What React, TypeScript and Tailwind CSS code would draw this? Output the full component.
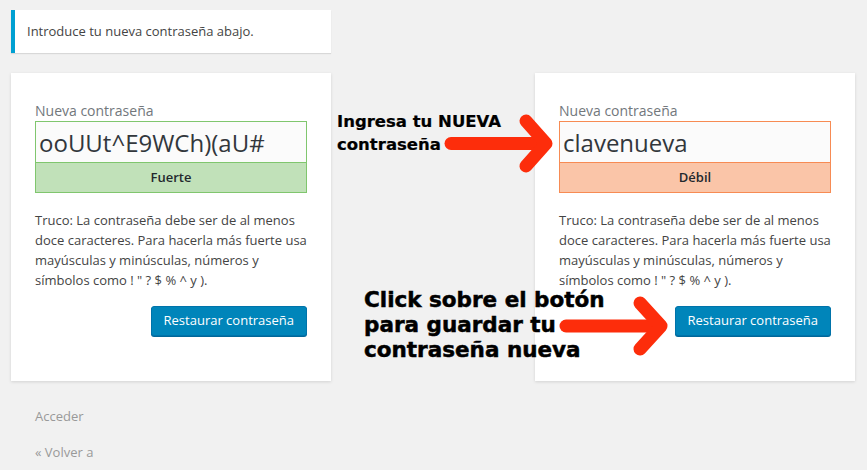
import React from "react";

const wp = { fontFamily: '"Open Sans", "Liberation Sans", sans-serif' };
const note = { fontFamily: '"DejaVu Sans", Verdana, sans-serif' };

function ResetCard({ value, strength, good }: { value: string; strength: string; good: boolean }) {
  return (
    <div className="w-[320px] h-[308px] bg-white shadow-[0_1px_3px_rgba(0,0,0,0.13)] px-[24px] pt-[27px]">
      <label className="block text-[14px] leading-[21px] text-[#72777c]">Nueva contraseña</label>
      <div
        className={
          good
            ? "h-[42px] border border-[#80c66e] bg-[#fbfbfb] pl-[3px] text-[24px] leading-[41px] text-[#32373c]"
            : "h-[42px] border border-[#f78b53] bg-[#fbfbfb] pl-[3px] text-[24px] leading-[41px] text-[#32373c]"
        }
      >
        {value}
      </div>
      <div
        className={
          good
            ? "h-[30px] border border-t-0 border-[#80c66e] bg-[#c1e1b9] flex items-center justify-center text-[13px] font-semibold text-[#23282d]"
            : "h-[30px] border border-t-0 border-[#f78b53] bg-[#fac5a8] flex items-center justify-center text-[13px] font-semibold text-[#23282d]"
        }
      >
        {strength}
      </div>
      <p className="mt-[17px] w-[272px] text-[13px] leading-[20px] text-[#444]">
        Truco: La contraseña debe ser de al menos doce caracteres. Para hacerla más fuerte usa mayúsculas y
        minúsculas, números y símbolos como ! " ? $ % ^ y ).
      </p>
      <div className="mt-[16px] flex justify-end">
        <button className="h-[30px] px-[12px] rounded-[3px] border border-[#0073aa] bg-[#0085ba] text-white text-[13px] shadow-[0_1px_0_#006799]">
          Restaurar contraseña
        </button>
      </div>
    </div>
  );
}

export default function App() {
  return (
    <div className="w-[867px] h-[470px] overflow-hidden bg-[#f1f1f1] px-[11px] pt-[10px]" style={wp}>
      <div className="w-[320px] h-[43px] bg-white border-l-4 border-[#00a0d2] shadow-[0_1px_1px_rgba(0,0,0,0.1)] flex items-center pl-[12px] text-[13px] text-[#444]">
        Introduce tu nueva contraseña abajo.
      </div>

      <div className="relative mt-[20px] flex gap-[204px]">
        <ResetCard value="ooUUt^E9WCh)(aU#" strength="Fuerte" good />
        <ResetCard value="clavenueva" strength="Débil" good={false} />

        <div
          className="absolute left-[326px] top-[37px] text-[16.5px] leading-[23px] font-bold text-black [-webkit-text-stroke:0.2px_black]"
          style={note}
        >
          Ingresa tu NUEVA
          <br />
          contraseña
        </div>
        <div
          className="absolute left-[353px] top-[214px] text-[21.5px] leading-[25px] font-bold text-black [-webkit-text-stroke:0.5px_black]"
          style={note}
        >
          Click sobre el botón
          <br />
          para guardar tu
          <br />
          contraseña nueva
        </div>

        <svg
          className="absolute left-[-11px] top-[-73px] pointer-events-none"
          width="867"
          height="470"
          viewBox="0 0 867 470"
        >
          <g fill="none" stroke="#fd2d0b" strokeWidth="13" strokeLinecap="round" strokeLinejoin="round">
            <path d="M451 143.5 H544" />
            <path d="M526 121 L546 143.5 L526 166" />
            <path d="M566 326 H656" />
            <path d="M640 303 L661 326 L640 349" />
          </g>
        </svg>
      </div>

      <div className="pl-[24px] mt-[25px] text-[13px] leading-[20px] text-[#999]">
        <div>Acceder</div>
        <div className="mt-[16px]">« Volver a</div>
      </div>
    </div>
  );
}
